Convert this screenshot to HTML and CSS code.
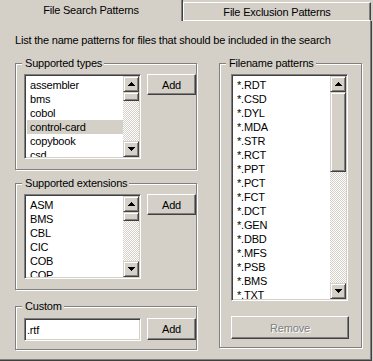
FILE: index.html
```html
<!DOCTYPE html>
<html lang="en">
<head>
    <meta charset="UTF-8">
    <meta name="viewport" content="width=device-width, initial-scale=1.0">
    <title>File Search Patterns</title>
    <link rel="stylesheet" href="styles.css">
</head>
<body>
    <div class="tabs">
        <div class="tab active">File Search Patterns</div>
        <div class="tab">File Exclusion Patterns</div>
    </div>
    <div class="panel">
        <p class="intro">List the name patterns for files that should be included in the search</p>
        <div class="columns">
            <div class="left">
                <div class="group types">
                    <span class="group-label">Supported types</span>
                    <div class="row">
                        <div class="listbox short">
                            <ul class="items">
                                <li>assembler</li>
                                <li>bms</li>
                                <li>cobol</li>
                                <li class="selected">control-card</li>
                                <li>copybook</li>
                                <li>csd</li>
                            </ul>
                            <div class="scrollbar">
                                <div class="sb-btn"><svg width="7" height="4" viewBox="0 0 7 4"><path d="M3 0h1v1h1v1h1v1h1v1H0V3h1V2h1V1h1z"/></svg></div>
                                <div class="sb-track"><div class="sb-thumb small"></div></div>
                                <div class="sb-btn"><svg width="7" height="4" viewBox="0 0 7 4"><path d="M0 0h7v1H6v1H5v1H4v1H3V3H2V2H1V1H0z"/></svg></div>
                            </div>
                        </div>
                        <button class="btn add">Add</button>
                    </div>
                </div>
                <div class="group extensions">
                    <span class="group-label">Supported extensions</span>
                    <div class="row">
                        <div class="listbox short">
                            <ul class="items">
                                <li>ASM</li>
                                <li>BMS</li>
                                <li>CBL</li>
                                <li>CIC</li>
                                <li>COB</li>
                                <li>COP</li>
                            </ul>
                            <div class="scrollbar">
                                <div class="sb-btn"><svg width="7" height="4" viewBox="0 0 7 4"><path d="M3 0h1v1h1v1h1v1h1v1H0V3h1V2h1V1h1z"/></svg></div>
                                <div class="sb-track"><div class="sb-thumb small"></div></div>
                                <div class="sb-btn"><svg width="7" height="4" viewBox="0 0 7 4"><path d="M0 0h7v1H6v1H5v1H4v1H3V3H2V2H1V1H0z"/></svg></div>
                            </div>
                        </div>
                        <button class="btn add">Add</button>
                    </div>
                </div>
                <div class="group custom">
                    <span class="group-label">Custom</span>
                    <div class="row">
                        <input class="textbox" type="text" value=".rtf">
                        <button class="btn add custom-add">Add</button>
                    </div>
                </div>
            </div>
            <div class="group patterns">
                <span class="group-label">Filename patterns</span>
                <div class="listbox tall">
                    <ul class="items">
                        <li>*.RDT</li>
                        <li>*.CSD</li>
                        <li>*.DYL</li>
                        <li>*.MDA</li>
                        <li>*.STR</li>
                        <li>*.RCT</li>
                        <li>*.PPT</li>
                        <li>*.PCT</li>
                        <li>*.FCT</li>
                        <li>*.DCT</li>
                        <li>*.GEN</li>
                        <li>*.DBD</li>
                        <li>*.MFS</li>
                        <li>*.PSB</li>
                        <li>*.BMS</li>
                        <li>*.TXT</li>
                    </ul>
                    <div class="scrollbar">
                        <div class="sb-btn"><svg width="7" height="4" viewBox="0 0 7 4"><path d="M3 0h1v1h1v1h1v1h1v1H0V3h1V2h1V1h1z"/></svg></div>
                        <div class="sb-track"><div class="sb-thumb big"></div></div>
                        <div class="sb-btn"><svg width="7" height="4" viewBox="0 0 7 4"><path d="M0 0h7v1H6v1H5v1H4v1H3V3H2V2H1V1H0z"/></svg></div>
                    </div>
                </div>
                <button class="btn remove" disabled>Remove</button>
            </div>
        </div>
    </div>
</body>
</html>
```

FILE: styles.css
```css
body {
    margin: 0;
    width: 373px;
    height: 361px;
    overflow: hidden;
    background-color: #d4d0c8;
    font-family: "Liberation Sans", Arial, sans-serif;
    font-size: 11px;
    letter-spacing: -0.2px;
    color: #000;
}
.tabs {
    display: flex;
    height: 21px;
}
.tab {
    box-sizing: border-box;
}
.tab.active {
    width: 183px;
    height: 21px;
    line-height: 20px;
    text-align: center;
    border-right: 1px solid #404040;
    box-shadow: inset -1px 0 #808080;
}
.tab:not(.active) {
    width: 188px;
    height: 19px;
    margin-top: 2px;
    line-height: 19px;
    text-align: center;
    border-top: 1px solid #fff;
    border-left: 1px solid #fff;
    border-right: 1px solid #404040;
    border-bottom: 1px solid #fff;
    box-shadow: inset -1px 0 #808080;
}
.panel {
    box-sizing: border-box;
    width: 372px;
    height: 340px;
    border-right: 1px solid #404040;
    border-bottom: 1px solid #404040;
    box-shadow: inset -1px -1px #808080;
    padding-left: 15px;
}
.intro {
    margin: 0;
    padding-top: 13px;
    line-height: 13px;
}
.columns {
    display: grid;
    grid-template-columns: 182px 143px;
    column-gap: 22px;
    align-items: start;
    margin-top: 16px;
}
.left {
    display: flex;
    flex-direction: column;
}
.group {
    position: relative;
    box-sizing: border-box;
    border: 1px solid #808080;
    box-shadow: inset 1px 1px #fff, 1px 1px #fff;
}
.group-label {
    position: absolute;
    top: -7px;
    left: 6px;
    padding: 0 2px 0 3px;
    line-height: 13px;
    background-color: #d4d0c8;
}
.types, .extensions {
    height: 107px;
    padding: 10px 0 0 8px;
}
.extensions {
    margin-top: 13px;
}
.custom {
    height: 44px;
    margin-top: 16px;
    padding: 11px 0 0 8px;
}
.patterns {
    height: 285px;
    padding: 10px 0 0 11px;
    display: flex;
    flex-direction: column;
}
.row {
    display: flex;
    align-items: flex-start;
    gap: 6px;
}
.listbox {
    box-sizing: border-box;
    display: flex;
    width: 117px;
    background-color: #fff;
    border: 1px solid;
    border-color: #808080 #fff #fff #808080;
    box-shadow: inset 1px 1px #404040, inset -1px -1px #d4d0c8;
    padding: 1px;
    overflow: hidden;
}
.listbox.short {
    height: 85px;
}
.listbox.tall {
    height: 227px;
}
.items {
    flex: 1;
    list-style: none;
    margin: 0;
    padding: 2px 0 0 1px;
    overflow: hidden;
}
.items li {
    height: 14px;
    line-height: 14px;
    padding-left: 3px;
    white-space: nowrap;
}
.items li.selected {
    background-color: #d4d0c8;
}
.scrollbar {
    width: 16px;
    display: flex;
    flex-direction: column;
}
.sb-btn, .sb-thumb {
    box-sizing: border-box;
    background-color: #d4d0c8;
    border: 1px solid;
    border-color: #d4d0c8 #404040 #404040 #d4d0c8;
    box-shadow: inset 1px 1px #fff, inset -1px -1px #808080;
}
.sb-btn {
    height: 16px;
    display: flex;
    align-items: center;
    justify-content: center;
}
.sb-btn svg {
    display: block;
    shape-rendering: crispEdges;
}
.sb-track {
    flex: 1;
    background: repeating-conic-gradient(#fff 0 25%, #d4d0c8 0 50%) 0 0 / 2px 2px;
}
.sb-thumb.small {
    height: 9px;
}
.sb-thumb.big {
    height: 80px;
}
.btn {
    box-sizing: border-box;
    font-family: inherit;
    font-size: 11px;
    letter-spacing: inherit;
    color: #000;
    background-color: #d4d0c8;
    border: 1px solid;
    border-color: #fff #404040 #404040 #fff;
    box-shadow: inset -1px -1px #808080;
    padding: 0;
}
.add {
    width: 49px;
    height: 21px;
}
.custom-add {
    height: 22px;
}
.remove {
    width: 118px;
    height: 23px;
    margin-top: 15px;
    color: #808080;
    text-shadow: 1px 1px #fff;
}
.textbox {
    box-sizing: border-box;
    width: 117px;
    height: 23px;
    margin: 0;
    padding: 0 0 0 2px;
    font-family: inherit;
    font-size: 11px;
    letter-spacing: inherit;
    background-color: #fff;
    border: 1px solid;
    border-color: #808080 #fff #fff #808080;
    box-shadow: inset 1px 1px #404040, inset -1px -1px #d4d0c8;
    outline: none;
}
```
